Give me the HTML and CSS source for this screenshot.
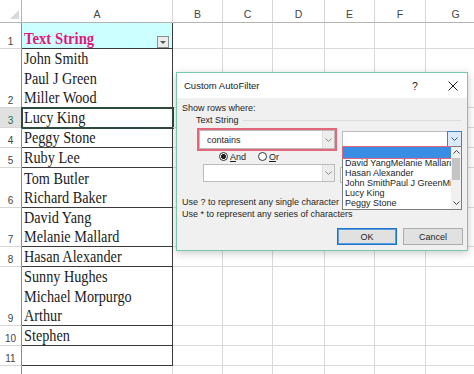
FILE: index.html
```html
<!DOCTYPE html>
<html lang="en">
<head>
    <meta charset="UTF-8">
    <title>Custom AutoFilter</title>
    <link rel="stylesheet" href="styles.css">
</head>
<body>
<div class="sheet">
    <div class="corner"><svg width="22" height="23" viewBox="0 0 22 23"><polygon points="19,10 19,19 10,19" fill="#d9d9d9"/></svg></div>
    <div class="colhead">A</div>
    <div class="colhead">B</div>
    <div class="colhead">C</div>
    <div class="colhead">D</div>
    <div class="colhead">E</div>
    <div class="colhead">F</div>
    <div class="colhead">G</div>

    <div class="rowhead">1</div>
    <div class="cell a head"><span class="names">Text String</span><span class="filter"></span></div>
    <div class="cell"></div><div class="cell"></div><div class="cell"></div><div class="cell"></div><div class="cell"></div><div class="cell"></div>

    <div class="rowhead">2</div>
    <div class="cell a"><span class="names">John Smith<br>Paul J Green<br>Miller Wood</span></div>
    <div class="cell"></div><div class="cell"></div><div class="cell"></div><div class="cell"></div><div class="cell"></div><div class="cell"></div>

    <div class="rowhead sel">3</div>
    <div class="cell a cur"><span class="names">Lucy King</span></div>
    <div class="cell"></div><div class="cell"></div><div class="cell"></div><div class="cell"></div><div class="cell"></div><div class="cell"></div>

    <div class="rowhead">4</div>
    <div class="cell a"><span class="names">Peggy Stone</span></div>
    <div class="cell"></div><div class="cell"></div><div class="cell"></div><div class="cell"></div><div class="cell"></div><div class="cell"></div>

    <div class="rowhead">5</div>
    <div class="cell a"><span class="names">Ruby Lee</span></div>
    <div class="cell"></div><div class="cell"></div><div class="cell"></div><div class="cell"></div><div class="cell"></div><div class="cell"></div>

    <div class="rowhead">6</div>
    <div class="cell a"><span class="names">Tom Butler<br>Richard Baker</span></div>
    <div class="cell"></div><div class="cell"></div><div class="cell"></div><div class="cell"></div><div class="cell"></div><div class="cell"></div>

    <div class="rowhead">7</div>
    <div class="cell a"><span class="names">David Yang<br>Melanie Mallard</span></div>
    <div class="cell"></div><div class="cell"></div><div class="cell"></div><div class="cell"></div><div class="cell"></div><div class="cell"></div>

    <div class="rowhead">8</div>
    <div class="cell a"><span class="names">Hasan Alexander</span></div>
    <div class="cell"></div><div class="cell"></div><div class="cell"></div><div class="cell"></div><div class="cell"></div><div class="cell"></div>

    <div class="rowhead">9</div>
    <div class="cell a"><span class="names">Sunny Hughes<br>Michael Morpurgo<br>Arthur</span></div>
    <div class="cell"></div><div class="cell"></div><div class="cell"></div><div class="cell"></div><div class="cell"></div><div class="cell"></div>

    <div class="rowhead">10</div>
    <div class="cell a"><span class="names">Stephen</span></div>
    <div class="cell"></div><div class="cell"></div><div class="cell"></div><div class="cell"></div><div class="cell"></div><div class="cell"></div>

    <div class="rowhead">11</div>
    <div class="cell a"></div>
    <div class="cell"></div><div class="cell"></div><div class="cell"></div><div class="cell"></div><div class="cell"></div><div class="cell"></div>

    <div class="rowhead">12</div>
    <div class="cell"></div>
    <div class="cell"></div><div class="cell"></div><div class="cell"></div><div class="cell"></div><div class="cell"></div><div class="cell"></div>
</div>

<div class="dialog">
    <div class="dlg-head">
        <span class="dlg-title">Custom AutoFilter</span>
        <span class="dlg-help">?</span>
        <span class="dlg-close"><svg width="10" height="10" viewBox="0 0 10 10"><path d="M0.5 0.5L9.5 9.5M9.5 0.5L0.5 9.5" stroke="#222" stroke-width="1"/></svg></span>
    </div>
    <div class="dlg-body">
        <div class="show-lbl">Show rows where:</div>
        <div class="group-lbl"><span>Text String</span></div>
        <div class="crit">
            <div class="hl">
                <div class="combo">
                    <span class="val">contains</span>
                    <span class="arrow"><svg width="7" height="4" viewBox="0 0 7 4"><polyline points="0.5,0.5 3.5,3.5 6.5,0.5" fill="none" stroke="#8a8a8a"/></svg></span>
                </div>
            </div>
            <div class="combo value focus">
                <span class="val"></span>
                <span class="arrow"><svg width="7" height="4" viewBox="0 0 7 4"><polyline points="0.5,0.5 3.5,3.5 6.5,0.5" fill="none" stroke="#2a5d8f"/></svg></span>
            </div>
        </div>
        <div class="radios">
            <span class="radio on"></span><span class="rlbl"><u>A</u>nd</span>
            <span class="radio"></span><span class="rlbl"><u>O</u>r</span>
        </div>
        <div class="crit second">
            <div class="combo">
                <span class="val"></span>
                <span class="arrow"><svg width="7" height="4" viewBox="0 0 7 4"><polyline points="0.5,0.5 3.5,3.5 6.5,0.5" fill="none" stroke="#8a8a8a"/></svg></span>
            </div>
            <div class="combo value">
                <span class="val"></span>
                <span class="arrow"></span>
            </div>
        </div>
        <div class="hints">
            <p>Use ? to represent any single character</p>
            <p>Use * to represent any series of characters</p>
        </div>
        <div class="buttons">
            <button class="btn default">OK</button>
            <button class="btn">Cancel</button>
        </div>
    </div>

    <div class="droplist">
        <div class="items">
            <div class="item pick"></div>
            <div class="item">David YangMelanie Mallard</div>
            <div class="item">Hasan Alexander</div>
            <div class="item">John SmithPaul J GreenMiller Wood</div>
            <div class="item">Lucy King</div>
            <div class="item">Peggy Stone</div>
        </div>
        <div class="vscroll">
            <span class="sb-btn"><svg width="7" height="4" viewBox="0 0 7 4"><polyline points="0.5,3.5 3.5,0.5 6.5,3.5" fill="none" stroke="#444"/></svg></span>
            <span class="thumb"></span>
            <span class="sb-btn down"><svg width="7" height="4" viewBox="0 0 7 4"><polyline points="0.5,0.5 3.5,3.5 6.5,0.5" fill="none" stroke="#444"/></svg></span>
        </div>
    </div>
</div>
</body>
</html>
```

FILE: styles.css
```css
*{
    margin:0;padding:0;
    box-sizing: border-box;
}
body{
    width:474px;
    height:374px;
    overflow:hidden;
    background:#fff;
    position:relative;
    font-family:"Liberation Sans", Arial, sans-serif;
}

/* sheet */
.sheet{
    display:grid;
    grid-template-columns:22px 151px 50px 50px 52px 50px 51px 60px;
    grid-template-rows:23px 26px 59px 20px 20px 20px 40px 39px 20px 59px 20px 20px 20px;
}
.corner{
    border-right:1px solid #b4b4b4;
    border-bottom:1px solid #b4b4b4;
}
.corner svg{
    display:block;
}
.colhead{
    border-right:1px solid #d6d6d6;
    border-bottom:1px solid #b4b4b4;
    font-size:10.5px;
    color:#444;
    display:flex;
    align-items:flex-end;
    justify-content:center;
    padding-bottom:2px;
}
.rowhead{
    border-right:1px solid #8c8c8c;
    border-bottom:1px solid #d6d6d6;
    font-size:10px;
    color:#444;
    display:flex;
    align-items:flex-end;
    justify-content:center;
    padding-bottom:1px;
}
.rowhead.sel{
    background:#e1e1e1;
    color:#217346;
}
.cell{
    border-right:1px solid #dadada;
    border-bottom:1px solid #dadada;
}
.cell.a{
    border-right-color:#3a3a3a;
    border-bottom-color:#3a3a3a;
    font-family:"Liberation Serif", "Times New Roman", serif;
    font-size:16px;
    color:#1a1a1a;
    display:flex;
    align-items:flex-end;
    padding-left:2px;
}
.names{
    display:block;
    line-height:19.6px;
    margin-bottom:-1px;
    white-space:nowrap;
    transform:scaleX(.89);
    transform-origin:left bottom;
}
.cell.head{
    background:#ccffff;
    color:#e2187c;
    font-weight:bold;
    justify-content:space-between;
    padding-right:3px;
}
.cell.head .names{
    transform:scaleX(.92);
}
.filter{
    width:12px;
    height:12px;
    border:1px solid #8e8e8e;
    background:#ececec;
    display:flex;
    align-items:center;
    justify-content:center;
}
.filter::after{
    content:"";
    border-left:3px solid transparent;
    border-right:3px solid transparent;
    border-top:3px solid #555;
}
.cell.cur{
    outline:2px solid #2e4a3d;
    outline-offset:-1px;
}

/* dialog */
.dialog{
    position:absolute;
    left:176px;
    top:72px;
    width:292px;
    height:179px;
    border:1px solid #79c7af;
    background:#f0f0f0;
    box-shadow:0 2px 8px rgba(0,0,0,.22);
    display:flex;
    flex-direction:column;
    font-size:9px;
    color:#1e1e1e;
}
.dlg-head{
    height:25px;
    background:#fff;
    display:flex;
    align-items:center;
    padding:0 7px;
}
.dlg-title{
    flex:1;
    font-size:9.5px;
    color:#222;
}
.dlg-help{
    width:14px;
    text-align:center;
    font-size:10.5px;
}
.dlg-close{
    width:14px;
    margin-left:24px;
    display:flex;
    justify-content:center;
}
.dlg-body{
    flex:1;
    padding:0 4px 0 5px;
}
.show-lbl{
    margin-top:4px;
    line-height:12px;
}
.group-lbl{
    display:flex;
    align-items:center;
    line-height:12px;
    padding-left:14px;
}
.group-lbl::after{
    content:"";
    flex:1;
    border-top:1px solid #dcdcdc;
    margin:0 2px 0 4px;
}
.crit{
    display:flex;
    align-items:flex-start;
    margin-top:2px;
}
.hl{
    margin-left:15px;
    width:140px;
    height:23px;
    border:2px solid #e2677a;
}
.combo{
    display:flex;
    height:100%;
    background:#fff;
    border:1px solid #bcbcbc;
}
.combo .val{
    flex:1;
    padding-left:7px;
    display:flex;
    align-items:center;
}
.combo .arrow{
    width:12px;
    background:#ededed;
    border-left:1px solid #dedede;
    display:flex;
    align-items:center;
    justify-content:center;
}
.combo.value{
    margin-left:5px;
    margin-top:3px;
    width:120px;
    height:16px;
}
.combo.focus .arrow{
    width:15px;
    margin:-1px -1px -1px 0;
    border:1px solid #3b83c6;
    background:#dcebf9;
}
.crit.second{
    margin-top:2px;
}
.crit.second > .combo:first-child{
    margin-left:21px;
    width:132px;
    height:18px;
}
.radios{
    display:flex;
    align-items:center;
    height:11px;
    padding-left:37px;
}
.radio{
    width:9px;
    height:9px;
    border:1px solid #333;
    border-radius:50%;
    background:#fff;
}
.radio.on{
    background:radial-gradient(circle, #222 2.2px, #fff 2.8px);
}
.rlbl{
    margin-left:2px;
    margin-right:12px;
}
.hints{
    margin-top:13px;
    line-height:12px;
    white-space:nowrap;
}
.buttons{
    display:flex;
    justify-content:flex-end;
    gap:6px;
    margin-top:8px;
}
.btn{
    width:60px;
    height:17px;
    border:1px solid #adadad;
    background:#e1e1e1;
    font:inherit;
    color:#1e1e1e;
}
.btn.default{
    border-color:#1c74cc;
    box-shadow:inset 0 0 0 1px #5d9ddb;
}

/* open list under the value box */
.droplist{
    position:absolute;
    left:165px;
    top:73px;
    width:120px;
    height:64px;
    border:1px solid #7d7d7d;
    background:#fff;
    display:flex;
}
.items{
    flex:1;
    min-width:0;
}
.item{
    height:10px;
    line-height:10px;
    padding-left:2px;
    white-space:nowrap;
    overflow:hidden;
}
.item.pick{
    height:11px;
    background:#3a8de4;
    outline:1.5px solid #e3647a;
}
.vscroll{
    width:10px;
    background:#f0f0f0;
    display:flex;
    flex-direction:column;
    align-items:center;
}
.sb-btn{
    height:10px;
    display:flex;
    align-items:center;
}
.sb-btn.down{
    margin-top:auto;
    margin-bottom:1px;
}
.thumb{
    width:8px;
    height:22px;
    margin-top:1px;
    background:#c4c4c4;
}
```
